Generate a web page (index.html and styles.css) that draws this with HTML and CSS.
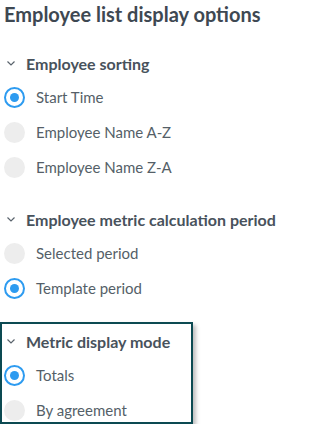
FILE: index.html
```html
<!DOCTYPE html>
<html lang="en">
<head>
  <meta charset="UTF-8">
  <meta name="viewport" content="width=device-width, initial-scale=1.0">
  <title>Employee list display options</title>
  <link rel="stylesheet" href="styles.css">
</head>
<body>

  <h1 class="title">Employee list display options</h1>

  <div class="group group-first">
    <div class="group-head">
      <svg class="chevron" width="8" height="5" viewBox="0 0 8 5"><polyline points="0.5,0.5 4,4 7.5,0.5" /></svg>
      <span>Employee sorting</span>
    </div>
    <div class="options">
      <label class="option"><span class="radio checked"></span>Start Time</label>
      <label class="option"><span class="radio"></span>Employee Name A-Z</label>
      <label class="option"><span class="radio"></span>Employee Name Z-A</label>
    </div>
  </div>

  <div class="group">
    <div class="group-head">
      <svg class="chevron" width="8" height="5" viewBox="0 0 8 5"><polyline points="0.5,0.5 4,4 7.5,0.5" /></svg>
      <span>Employee metric calculation period</span>
    </div>
    <div class="options">
      <label class="option"><span class="radio"></span>Selected period</label>
      <label class="option"><span class="radio checked"></span>Template period</label>
    </div>
  </div>

  <!-- highlighted section -->
  <div class="group group-boxed">
    <div class="group-head">
      <svg class="chevron" width="8" height="5" viewBox="0 0 8 5"><polyline points="0.5,0.5 4,4 7.5,0.5" /></svg>
      <span>Metric display mode</span>
    </div>
    <div class="options">
      <label class="option"><span class="radio checked"></span>Totals</label>
      <label class="option"><span class="radio"></span>By agreement</label>
    </div>
  </div>

</body>
</html>
```

FILE: styles.css
```css
body {
  margin: 0;
  padding: 0 0 0 4px;
  font-family: Lato, "Open Sans", sans-serif;
  background: #fff;
  color: #4f5963;
}

.title {
  margin: 0;
  font-size: 20px;
  line-height: 28px;
  font-weight: 700;
  color: #3e4852;
}

.group {
  margin-top: 28px;
}

.group-first {
  margin-top: 23px;
}

.group-head {
  display: flex;
  align-items: center;
  height: 24px;
  font-size: 16px;
  font-weight: 700;
  color: #48525c;
}

.chevron {
  margin: 1px 11px 0 3px;
  fill: none;
  stroke: #5a636c;
  stroke-width: 1.2;
}

.options {
  display: flex;
  flex-direction: column;
  gap: 11px;
  margin-top: 10px;
}

.option {
  display: flex;
  align-items: center;
  height: 24px;
  font-size: 15px;
  color: #555f68;
}

.radio {
  box-sizing: border-box;
  width: 21px;
  height: 21px;
  margin-right: 11px;
  border-radius: 50%;
  background: #ededed;
}

.radio.checked {
  background: #fff;
  border: 2px solid #2d9bf0;
  display: flex;
  align-items: center;
  justify-content: center;
}

.radio.checked::after {
  content: "";
  width: 9px;
  height: 9px;
  border-radius: 50%;
  background: #2d9bf0;
}

.group-boxed {
  margin: 22px 0 0 -4px;
  width: 193px;
  box-sizing: border-box;
  padding: 5px 0 0 2px;
  border: 2px solid #0c4a52;
  box-shadow: 3px 3px 4px rgba(0, 0, 0, 0.25);
}

.group-boxed .options {
  margin-top: 10px;
}
```
